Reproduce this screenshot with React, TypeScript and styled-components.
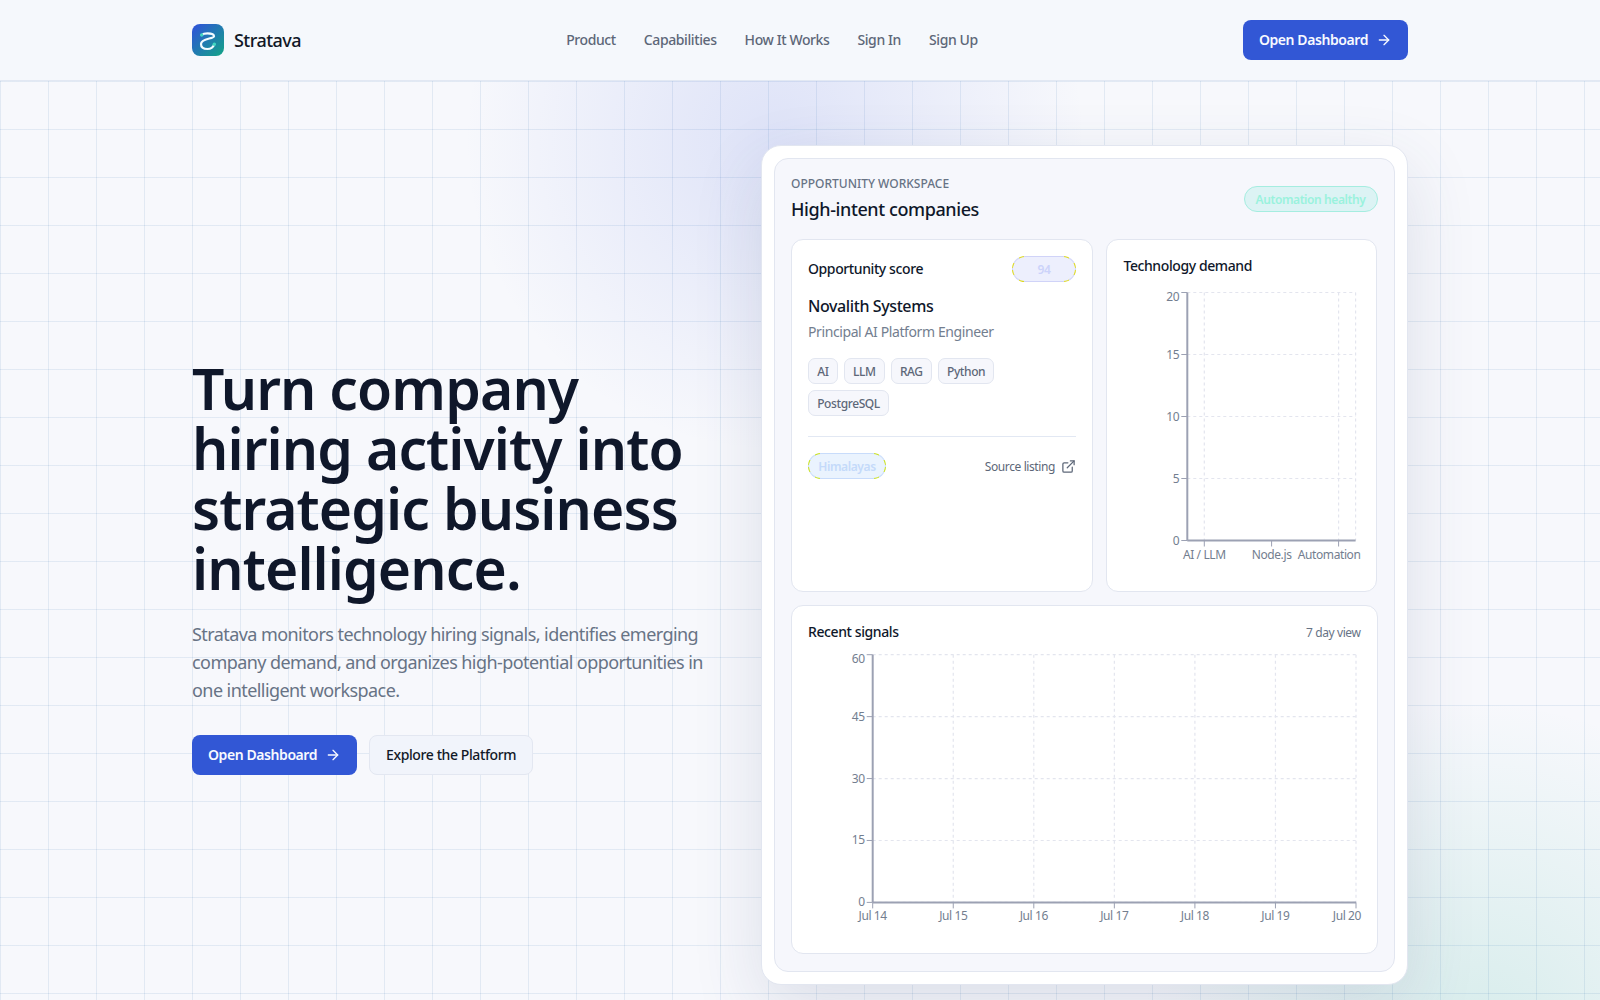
import React from "react";
import styled, { createGlobalStyle } from "styled-components";
import { ArrowRight, ExternalLink } from "lucide-react";

const GlobalStyle = createGlobalStyle`
  html, body {
    margin: 0;
    padding: 0;
    background: #f7f8fc;
    font-family: "Noto Sans", "Open Sans", sans-serif;
    letter-spacing: -0.025em;
    color: #0f172a;
    overflow: hidden;
    height: 1000px;
  }
  * { box-sizing: border-box; }
`;

const Page = styled.div`
  width: 1600px;
  height: 1000px;
  overflow: hidden;
  display: flex;
  flex-direction: column;
`;

const Header = styled.header`
  height: 81px;
  flex: none;
  background: #f5f8fc;
  border-bottom: 1px solid #e2e8f3;
`;

const HeaderInner = styled.div`
  width: 1216px;
  height: 80px;
  margin: 0 auto;
  display: flex;
  justify-content: space-between;
  align-items: center;
`;

const Brand = styled.div`
  display: flex;
  align-items: center;
  gap: 10px;
  font-size: 18px;
  font-weight: 500;
  letter-spacing: -0.03em;
  color: #111827;
`;

const Nav = styled.nav`
  display: flex;
  gap: 28px;
  padding-bottom: 2px;
  font-size: 14px;
  font-weight: 500;
  color: #5d6778;
`;

const PrimaryButton = styled.a`
  height: 40px;
  padding: 0 16px 1px 16px;
  display: inline-flex;
  align-items: center;
  gap: 8px;
  border-radius: 8px;
  background: #3257d5;
  color: #f8faff;
  font-size: 14px;
  font-weight: 600;
  letter-spacing: -0.03em;
`;

const SecondaryButton = styled.a`
  height: 40px;
  padding: 0 16px 1px;
  display: inline-flex;
  align-items: center;
  border-radius: 8px;
  background: #f1f4fb;
  border: 1px solid #e3e7f1;
  color: #111827;
  font-size: 14px;
  font-weight: 500;
`;

const Hero = styled.main`
  flex: none;
  height: 968px;
  background-color: #f7f8fc;
  background-image:
    linear-gradient(to right, rgba(37, 99, 170, 0.1) 1px, transparent 1px),
    linear-gradient(to bottom, rgba(37, 99, 170, 0.1) 1px, transparent 1px),
    radial-gradient(circle 310px at 775px 60px, rgba(120, 140, 230, 0.2), transparent 100%),
    radial-gradient(circle 340px at 1480px 960px, rgba(30, 170, 140, 0.15), transparent 100%);
  background-size: 48px 48px, 48px 48px, 100% 100%, 100% 100%;
`;

const HeroInner = styled.div`
  width: 1216px;
  height: 100%;
  margin: 0 auto;
  display: grid;
  grid-template-columns: 529px 647px;
  gap: 40px;
  align-items: center;
`;

const Copy = styled.section`
  display: flex;
  flex-direction: column;
  padding-top: 3px;
`;

const Title = styled.h1`
  margin: 0;
  font-size: 57px;
  line-height: 60px;
  font-weight: 600;
  letter-spacing: -0.9px;
  color: #0f172a;
`;

const Lead = styled.p`
  margin: 22px 0 0;
  font-size: 18px;
  line-height: 28px;
  letter-spacing: -0.0315em;
  color: #677385;
`;

const Actions = styled.div`
  margin-top: 31px;
  display: flex;
  gap: 12px;
`;

const Shell = styled.section`
  height: 840px;
  padding: 12px;
  background: #fff;
  border: 1px solid #e2e6f0;
  border-radius: 20px;
  box-shadow: 0 24px 70px rgba(60, 72, 110, 0.14);
`;

const Workspace = styled.div`
  height: 100%;
  padding: 16px 16.5px 16px 16px;
  background: #f6f7fc;
  border: 1px solid #e2e6f0;
  border-radius: 14px;
  display: flex;
  flex-direction: column;
`;

const WorkspaceHead = styled.div`
  display: flex;
  justify-content: space-between;
  align-items: flex-start;
  height: 50px;
  margin-bottom: 14px;
`;

const Eyebrow = styled.div`
  margin-top: 1px;
  font-size: 12px;
  line-height: 16px;
  color: #677385;
  font-weight: 500;
  text-transform: uppercase;
  letter-spacing: 0;
`;

const WorkspaceTitle = styled.div`
  margin-top: 3px;
  font-size: 18px;
  line-height: 28px;
  font-weight: 500;
  color: #0f172a;
`;

const Pill = styled.span<{ $bg: string; $fg: string; $line: string; $corner?: string; $w: number }>`
  width: ${(p) => p.$w}px;
  height: 26px;
  display: inline-flex;
  align-items: center;
  justify-content: center;
  border-radius: 13px;
  border: 1px solid ${(p) => (p.$corner ? "transparent" : p.$line)};
  background: ${(p) => {
    if (!p.$corner) return p.$bg;
    const ring = (at: string) =>
      `radial-gradient(circle at ${at}, transparent 7px, ${p.$corner} 7px, ${p.$corner} 12px, transparent 12px) border-box`;
    return `linear-gradient(${p.$bg}, ${p.$bg}) padding-box, ${ring("0 0")}, ${ring("100% 0")}, ${ring("0 100%")}, ${ring("100% 100%")}, linear-gradient(${p.$line}, ${p.$line}) border-box`;
  }};
  color: ${(p) => p.$fg};
  font-size: 12px;
  font-weight: 600;
`;

const HealthPill = styled(Pill)`
  margin-top: 11px;
`;

const TopRow = styled.div`
  display: grid;
  grid-template-columns: 302px 271.1px;
  gap: 13.4px;
  height: 353px;
`;

const Card = styled.div`
  background: #fff;
  border: 1px solid #e2e6f0;
  border-radius: 12px;
  padding: 16px;
  min-width: 0;
`;

const ScoreHead = styled.div`
  display: flex;
  justify-content: space-between;
  align-items: center;
  height: 26px;
`;

const CardTitle = styled.div`
  font-size: 14px;
  line-height: 20px;
  font-weight: 500;
  color: #0f172a;
`;

const Company = styled.div`
  margin-top: 12px;
  font-size: 16px;
  line-height: 24px;
  font-weight: 500;
  color: #0f172a;
`;

const Role = styled.div`
  margin-top: 4px;
  font-size: 14px;
  line-height: 20px;
  color: #737e8f;
`;

const Tags = styled.div`
  margin-top: 16px;
  display: flex;
  flex-wrap: wrap;
  gap: 6px;
`;

const Tag = styled.span`
  height: 26px;
  padding: 0 8.2px;
  display: inline-flex;
  align-items: center;
  border-radius: 7px;
  border: 1px solid #e2e6f0;
  background: #f6f7fc;
  color: #5d6778;
  font-size: 12px;
  font-weight: 500;
`;

const SourceRow = styled.div`
  margin-top: 20px;
  padding-top: 16px;
  border-top: 1px solid #e2e8f3;
  display: flex;
  justify-content: space-between;
  align-items: center;
`;

const SourceLink = styled.a`
  display: inline-flex;
  align-items: center;
  gap: 6px;
  font-size: 12px;
  color: #5d6778;
`;

const Recent = styled(Card)`
  margin-top: 13px;
  height: 349.3px;
`;

const RecentHead = styled.div`
  display: flex;
  justify-content: space-between;
  align-items: center;
`;

const Hint = styled.span`
  font-size: 12px;
  color: #677385;
`;

const ChartSvg = styled.svg`
  display: block;
  overflow: visible;
`;

type XTick = { x: number; label: string; textX?: number; anchor?: "middle" | "end" };

type ChartProps = {
  width: number;
  height: number;
  left: number;
  top: number;
  right: number;
  bottom: number;
  yTicks: number[];
  yMax: number;
  xTicks: XTick[];
  gridX: number[];
};

function Chart({ width, height, left, top, right, bottom, yTicks, yMax, xTicks, gridX }: ChartProps) {
  const yPos = (v: number) => bottom - ((bottom - top) * v) / yMax;
  return (
    <ChartSvg width={width} height={height} viewBox={`0 0 ${width} ${height}`}>
      <g stroke="#e3e5ee" strokeWidth={1.2} strokeDasharray="3 3" fill="none">
        {yTicks.map((v) => (
          <line key={v} x1={left} x2={right} y1={yPos(v)} y2={yPos(v)} />
        ))}
        {gridX.map((x) => (
          <line key={x} x1={x} x2={x} y1={top} y2={bottom} />
        ))}
      </g>
      <g stroke="#9ca1b3" fill="none">
        <line x1={left} x2={left} y1={top} y2={bottom} strokeWidth={2} />
        <line x1={left} x2={right} y1={bottom} y2={bottom} strokeWidth={2} />
        {yTicks.map((v) => (
          <line key={v} x1={left - 6} x2={left} y1={yPos(v)} y2={yPos(v)} />
        ))}
        {xTicks.map((t) => (
          <line key={t.label} x1={t.x} x2={t.x} y1={bottom} y2={bottom + 6} />
        ))}
      </g>
      <g fill="#737e8f" fontSize={12}>
        {yTicks.map((v) => (
          <text key={v} x={left - 8} y={yPos(v) + (v === yMax ? 8 : 4)} textAnchor="end">
            {v}
          </text>
        ))}
        {xTicks.map((t) => (
          <text key={t.label} x={t.textX ?? t.x} y={bottom + 18} textAnchor={t.anchor || "middle"}>
            {t.label}
          </text>
        ))}
      </g>
    </ChartSvg>
  );
}

const LogoMark = () => (
  <svg width="32" height="32" viewBox="0 0 32 32">
    <defs>
      <linearGradient id="logoFill" x1="0" y1="0" x2="1" y2="1">
        <stop offset="0" stopColor="#3050dc" />
        <stop offset="1" stopColor="#12a585" />
      </linearGradient>
    </defs>
    <rect width="32" height="32" rx="8" fill="url(#logoFill)" />
    <path
      d="M9.7 11C11 9.8 13 9.3 15.5 9.3C19 9.3 22 10.2 22 12.2C22 15 9 14.2 9 20C9 23.4 12 25 15.5 25C18.5 25 21 23.5 22.3 20.3"
      fill="none"
      stroke="#f2fbff"
      strokeWidth="2.2"
      strokeLinecap="round"
    />
    <circle cx="9.7" cy="11" r="1.7" fill="#3fd6c0" />
    <circle cx="22.3" cy="20.3" r="1.7" fill="#3fd6c0" />
  </svg>
);

const techTicks: XTick[] = [
  { x: 81.3, label: "AI / LLM" },
  { x: 148.6, label: "Node.js" },
  { x: 215.6, label: "Automation", textX: 237.5, anchor: "end" },
];

const days = ["Jul 14", "Jul 15", "Jul 16", "Jul 17", "Jul 18", "Jul 19", "Jul 20"];
const signalTicks: XTick[] = days.map((label, i) =>
  i === 6
    ? { x: 64.7 + i * 80.55, label, textX: 553, anchor: "end" }
    : { x: 64.7 + i * 80.55, label }
);

export default function App() {
  return (
    <Page>
      <GlobalStyle />
      <Header>
        <HeaderInner>
          <Brand>
            <LogoMark />
            Stratava
          </Brand>
          <Nav>
            <span>Product</span>
            <span>Capabilities</span>
            <span>How It Works</span>
            <span>Sign In</span>
            <span>Sign Up</span>
          </Nav>
          <PrimaryButton>
            Open Dashboard <ArrowRight size={16} />
          </PrimaryButton>
        </HeaderInner>
      </Header>
      <Hero>
        <HeroInner>
          <Copy>
            <Title>Turn company hiring activity into strategic business intelligence.</Title>
            <Lead>
              Stratava monitors technology hiring signals, identifies emerging company demand, and
              organizes high-potential opportunities in one intelligent workspace.
            </Lead>
            <Actions>
              <PrimaryButton>
                Open Dashboard <ArrowRight size={16} />
              </PrimaryButton>
              <SecondaryButton>Explore the Platform</SecondaryButton>
            </Actions>
          </Copy>
          <Shell>
            <Workspace>
              <WorkspaceHead>
                <div>
                  <Eyebrow>Opportunity workspace</Eyebrow>
                  <WorkspaceTitle>High-intent companies</WorkspaceTitle>
                </div>
                <HealthPill $w={134} $bg="#dcf3f4" $fg="#9af2dd" $line="#a5ede0">
                  Automation healthy
                </HealthPill>
              </WorkspaceHead>
              <TopRow>
                <Card>
                  <ScoreHead>
                    <CardTitle>Opportunity score</CardTitle>
                    <Pill $w={64} $bg="#edeffd" $fg="#ccd3fa" $line="#d0d3f8" $corner="#dcd820">
                      94
                    </Pill>
                  </ScoreHead>
                  <Company>Novalith Systems</Company>
                  <Role>Principal AI Platform Engineer</Role>
                  <Tags>
                    <Tag>AI</Tag>
                    <Tag>LLM</Tag>
                    <Tag>RAG</Tag>
                    <Tag>Python</Tag>
                    <Tag>PostgreSQL</Tag>
                  </Tags>
                  <SourceRow>
                    <Pill $w={78} $bg="#eaf3fe" $fg="#c4dafa" $line="#c8dcfb" $corner="#c8e020">
                      Himalayas
                    </Pill>
                    <SourceLink>
                      Source listing <ExternalLink size={15} />
                    </SourceLink>
                  </SourceRow>
                </Card>
                <Card>
                  <CardTitle>Technology demand</CardTitle>
                  <Chart
                    width={237}
                    height={290}
                    left={64.3}
                    top={16.5}
                    right={232.6}
                    bottom={264.5}
                    yMax={20}
                    yTicks={[0, 5, 10, 15, 20]}
                    xTicks={techTicks}
                    gridX={[81.3, 215.6, 232.6]}
                  />
                </Card>
              </TopRow>
              <Recent>
                <RecentHead>
                  <CardTitle>Recent signals</CardTitle>
                  <Hint>7 day view</Hint>
                </RecentHead>
                <Chart
                  width={552}
                  height={290}
                  left={64.7}
                  top={12.7}
                  right={548}
                  bottom={260.4}
                  yMax={60}
                  yTicks={[0, 15, 30, 45, 60]}
                  xTicks={signalTicks}
                  gridX={signalTicks.map((t) => t.x).slice(1)}
                />
              </Recent>
            </Workspace>
          </Shell>
        </HeroInner>
      </Hero>
    </Page>
  );
}
